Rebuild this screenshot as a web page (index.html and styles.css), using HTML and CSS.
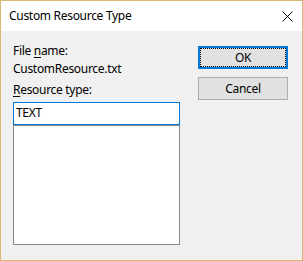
FILE: index.html
```html
<!DOCTYPE html>
<html>
<head>
<meta charset="utf-8">
<link rel="stylesheet" href="styles.css">
</head>
<body>
<div class="window">
  <div class="titlebar">
    <span class="title">Custom Resource Type</span>
    <svg class="close" width="11" height="11" viewBox="0 0 11 11"><path d="M0.5 0.5 L10.5 10.5 M10.5 0.5 L0.5 10.5" stroke="#000" stroke-width="1" fill="none"/></svg>
  </div>
  <div class="content">
    <div class="left">
      <div class="label">File <u>n</u>ame:</div>
      <div class="label">CustomResource.txt</div>
      <div class="label gap"><u>R</u>esource type:</div>
      <div class="edit">TEXT</div>
      <div class="list"></div>
    </div>
    <div class="right">
      <div class="btn default"><span>OK</span></div>
      <div class="btn"><span>Cancel</span></div>
    </div>
  </div>
</div>
</body>
</html>
```
FILE: styles.css
```css
html, body {
  margin: 0;
  padding: 0;
}
body {
  font-family: "Noto Sans", "Liberation Sans", sans-serif;
  font-size: 12px;
  letter-spacing: -0.3px;
  color: #000;
}
.window {
  width: 303px;
  height: 261px;
  box-sizing: border-box;
  border: 1px solid #d9b872;
  background: #f0f0f0;
  display: flex;
  flex-direction: column;
}
.titlebar {
  height: 30px;
  background: #fff;
  display: flex;
  align-items: center;
  padding-left: 8px;
  padding-right: 9px;
}
.title {
  flex: 1;
  line-height: 16px;
  margin-top: -1px;
}
.close {
  display: block;
  margin-top: 1px;
}
.content {
  display: flex;
  padding: 11px 0 0 12px;
  gap: 18px;
}
.left {
  width: 167px;
}
.label {
  line-height: 18px;
  white-space: nowrap;
}
.label u {
  text-underline-offset: 2px;
}
.label.gap {
  margin-top: 3px;
}
.edit {
  margin-top: 3px;
  height: 23px;
  box-sizing: border-box;
  border: 1px solid #0078d7;
  background: #fff;
  padding: 0 0 0 2px;
  line-height: 19px;
}
.list {
  height: 120px;
  box-sizing: border-box;
  border: 1px solid #828790;
  background: #fff;
}
.right {
  display: flex;
  flex-direction: column;
  gap: 8px;
  padding-top: 4px;
}
.btn {
  width: 90px;
  height: 23px;
  box-sizing: border-box;
  border: 1px solid #adadad;
  background: #e1e1e1;
  display: flex;
  align-items: center;
  justify-content: center;
  line-height: 16px;
}
.btn.default {
  border: 2px solid #0078d7;
  outline: 1px dotted #000;
  outline-offset: -3px;
}
```
